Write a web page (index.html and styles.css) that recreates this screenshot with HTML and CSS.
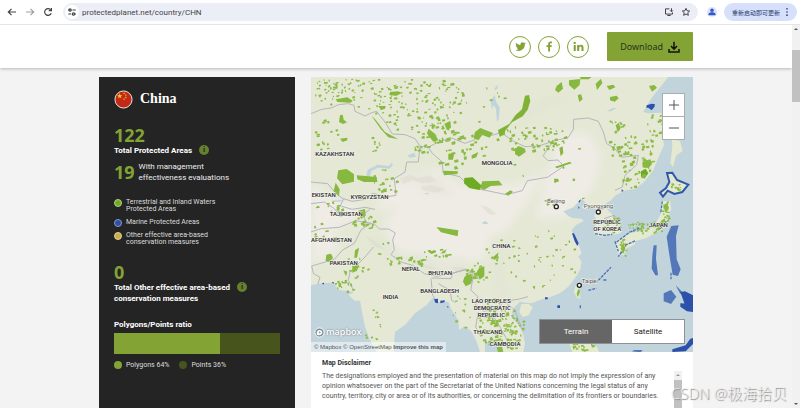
FILE: index.html
```
<!DOCTYPE html>
<html lang="en">
<head>
  <meta charset="UTF-8" />
  <meta name="viewport" content="width=device-width, initial-scale=1" />
  <title>China | Protected Planet</title>
  <link rel="stylesheet" href="styles.css">
</head>
<body>

  <div class="browser-bar">
    <button class="nav-btn" aria-label="Back"><svg viewBox="0 0 12 12"><path d="M10 6H2.5M5.5 2.8 2.3 6l3.2 3.2" /></svg></button>
    <button class="nav-btn faded" aria-label="Forward"><svg viewBox="0 0 12 12"><path d="M2 6h7.5M6.5 2.8 9.7 6 6.5 9.2" /></svg></button>
    <button class="nav-btn" aria-label="Reload"><svg viewBox="0 0 12 12"><path d="M9.2 7.2A3.4 3.4 0 1 1 8.6 3.7M9.4 2v2.6H6.8" /></svg></button>
    <div class="address">
      <span class="site-info"><svg viewBox="0 0 12 12"><path d="M2.5 4h2M8 8h1.800M6.500 4h3.300M2.200 8h3" /><circle cx="4" cy="4" r="1.200" /><circle cx="7.600" cy="8" r="1.200" /></svg></span>
      <input type="text" aria-label="Address" value="protectedplanet.net/country/CHN" />
      <button class="nav-btn" aria-label="Install"><svg viewBox="0 0 12 12"><path d="M6.5 2.2H1.8v6.3h8.4V6.5M4 10.2h4M9 1.5v4M7.3 4 9 5.7 10.7 4" /></svg></button>
      <button class="nav-btn" aria-label="Bookmark"><svg viewBox="0 0 12 12"><path d="M6 1.6l1.3 2.9 3.1.3-2.3 2.1.7 3.1L6 8.4 3.2 10l.7-3.1-2.3-2.1 3.1-.3z" /></svg></button>
    </div>
    <button class="profile" aria-label="Profile"><svg viewBox="0 0 12 12"><circle cx="6" cy="3.8" r="2.1" /><path d="M1.8 10V8.6C1.8 7 4 6.4 6 6.4s4.2.6 4.2 2.2V10z" /></svg></button>
    <button class="update">重新启动即可更新<svg viewBox="0 0 4 12"><circle cx="2" cy="2.2" r="1" /><circle cx="2" cy="6" r="1" /><circle cx="2" cy="9.8" r="1" /></svg></button>
  </div>

  <div class="viewport">
    <div class="page">
      <header class="site-header">
        <a class="social" href="#" aria-label="Twitter"><svg viewBox="0 0 24 24"><path d="M23.6 5c-.8.4-1.700.6-2.700.8 1-.6 1.700-1.500 2-2.600-.9.500-1.900.9-3 1.100a4.700 4.700 0 0 0-8 4.300C8 8.400 4.600 6.600 2.300 3.700c-1.300 2.200-.6 4.900 1.500 6.300-.8 0-1.500-.2-2.100-.6 0 2.300 1.600 4.200 3.800 4.700-.7.200-1.400.2-2.100.1.600 1.900 2.300 3.200 4.400 3.300A9.500 9.500 0 0 1 .8 19.400 13.400 13.400 0 0 0 21.300 7.500c.9-.7 1.700-1.500 2.300-2.500z" /></svg></a>
        <a class="social" href="#" aria-label="Facebook"><svg viewBox="0 0 24 24"><path d="M9 23V13H5.500V9H9V6.500C9 3 11 1 14.200 1c1.500 0 2.800.1 3.200.2v3.600h-2.200c-1.700 0-2.100.9-2.100 2.100V9h4.100l-.6 4h-3.500v10z" /></svg></a>
        <a class="social" href="#" aria-label="LinkedIn"><svg viewBox="0 0 24 24"><path d="M1.500 8.500H6V22H1.500zM9 8.500h4.300v1.900c.6-1.200 2.100-2.300 4.300-2.300 4.500 0 5.400 3 5.400 6.800V22h-4.500v-6.300c0-1.500 0-3.500-2.100-3.500s-2.800 1.700-2.800 3.400V22H9z" /><circle cx="3.700" cy="4.200" r="2.600" /></svg></a>
        <button class="download">Download<svg viewBox="0 0 24 24"><path d="M12 1.500V16M6 10l6 6.500 6-6.500M2 16v6h20v-6" /></svg></button>
      </header>

      <main class="content">
        <section class="stats">
          <h1>
            <svg class="flag" viewBox="0 0 20 20"><circle cx="10" cy="10" r="9" /><path d="M6 3.500l.8 2h2L7.200 6.800l.6 2L6 7.600 4.200 8.800l.6-2L3.200 5.500h2zM10 3h1.300v1.200H10zM11.800 4.800h1.200V6h-1.200zM11.800 7.200h1.200v1.200h-1.200zM10 9h1.300v1.200H10z" /></svg>
            China
          </h1>

          <div class="total">
            <strong class="number">122</strong>
            <h2>Total Protected Areas <button class="info" aria-label="More info">i</button></h2>
            <div class="managed">
              <strong class="number">19</strong>
              <p>With management<br>effectiveness evaluations</p>
            </div>
          </div>

          <ul class="legend">
            <li><span class="dot land"></span>Terrestrial and Inland Waters<br>Protected Areas</li>
            <li><span class="dot marine"></span>Marine Protected Areas</li>
            <li><span class="dot other"></span>Other effective area-based<br>conservation measures</li>
          </ul>

          <div class="oecm">
            <strong class="number">0</strong>
            <h2><span>Total Other effective area-based<br>conservation measures</span> <button class="info" aria-label="More info">i</button></h2>
          </div>

          <h2>Polygons/Points ratio</h2>
          <div class="ratio"><div style="width: 64%"></div></div>
          <ul class="ratio-key">
            <li><span class="dot polygons"></span>Polygons 64%</li>
            <li><span class="dot points"></span>Points 36%</li>
          </ul>
        </section>

        <section class="map-column">
          <div class="map">
            <svg class="map-canvas" viewBox="18 15 1146 825" role="img" aria-label="Map of protected areas in China">
              <defs>
                <filter id="soft"><feGaussianBlur stdDeviation="14" /></filter>
              </defs>
              <rect class="ground" x="18" y="15" width="1146" height="825" />

              <!-- dry highlands and pale plains -->
              <g class="dry" filter="url(#soft)">
                <path d="M280 310L400 290 480 345 640 335 720 300 700 340 660 400 600 480 520 500 400 490 300 470 240 440 290 400 200 420z" />
                <path d="M18 330L100 390 170 400 150 440 90 470 100 540 20 580z" />
                <path d="M240 450L400 440 560 470 540 560 430 580 330 550 260 530z" />
                <path d="M760 190L850 180 890 250 870 340 780 440 690 440 720 330z" />
              </g>
              <g class="relief" filter="url(#soft)">
                <path d="M280 325q60-25 130 10M350 355q50-15 90 15M200 500q60 30 80 60M320 550q80 30 160 20M590 550q-30 90 20 130M650 150q40-60 130-70" />
              </g>
              <g class="hills">
                <path d="M285 320l30-12 25 10 35-8 20 18-42 6-30-10-28 12zM345 345l35-5 40 12-25 10-40-8zM525 400l25 5 25 22-20 2zM180 490l35 20 25 25-32-12zM300 565l40 8 70 20-45-3zM440 585l35 0 20 12-40 5z" />
              </g>

              <!-- seas -->
              <g class="water">
                <path d="M1090 15L1040 77 1015 120 1030 124 1068 122 1080 140 1075 205 1077 220 1065 245 1045 295 1015 332 988 352 962 355 932 370 918 385 903 394 902 408 920 425 940 450 950 470 947 483 920 490 885 494 868 485 867 465 878 450 868 432 873 412 866 402 841 410 830 408 842 392 832 381 820 390 805 406 775 418 790 432 802 438 830 440 836 447 812 460 800 474 805 489 823 524 830 544 820 554 830 569 825 594 810 619 790 644 765 664 735 676 705 684 680 694 660 692 645 689 630 704 620 720 625 740 645 764 655 789 660 814 655 840H1164V15z" />
                <path d="M18 639L60 633 85 632 100 654 120 656 148 660 130 669 150 686 165 686 170 714 180 764 195 804 215 840H18z" />
                <path d="M266 840L270 779 300 759 330 724 365 699 385 676 400 690 430 689 440 714 460 744 462 774 480 762 500 779 515 809 525 840z" />
                <path d="M540 815l18-10 25 5 10 15-8 15h-45z" />
                <path d="M183 315l5-22 30-15 35 4 6-10 5 6-10 12-35-3-20 10-5 20zM80 386l30-3v5l-28 3zM308 250l20-8 5 12-18 3zM530 452l12-5 8 8-12 2zM905 118l18-10 12 0-16 10zM355 366l15-4v5z" />
                <path d="M568 50l10-12 0 12 -8 4zM557 85l12-16 5 22 10 14-2 34-6 12-3-40-8-12-4 14z" class="thin" />
              </g>

              <!-- islands -->
              <g class="island">
                <path d="M1100 202l25 5 8 30-20 14-9 35-8-12 6-50z" />
                <path d="M649 696l22 0 12 10-12 24-18 5-10-15z" />
                <path d="M821 642l5 38-10-3-9-16 5-22z" />
                <path d="M935 508l40-25 50-10 28-20 14-26 3-40 25 0 4 24-18 44-8 16-50 28-42 10-16 20-8 20-18-4-7-20z" />
                <path d="M960 520l22-8 12-10-6 16-20 10z" />
                <path d="M790 806l24-14 28 10 34 22 6 16h-80z" />
                <path class="hokkaido" d="M1086 303l16-1 14 22 34 14-18 22-24 6-20-10-14 18-9-12 18-14 10-18z" />
              </g>

              <!-- country borders -->
              <g class="border">
                <path d="M18 125L50 112 78 108 100 98 130 95 147 100 150 118 180 132 200 122 215 118 240 150 262 186 300 188 330 200 345 222 370 226 390 215 412 206 440 198 480 214 510 203 512 180 530 172 560 190 590 182 620 205 660 224 700 222 750 206 790 196 805 172 806 142 850 138 880 148 895 180 905 215 930 230 950 256 1000 250 995 278 960 310 952 345 930 355" />
                <path d="M370 226l12 18 30 26 2 32 50 12 32 32 50 10 58 12 48-12 15-30 60-10 50-34-18-18-30 2-15-15 25-35" />
                <path d="M345 222l-5 48-35 0-5 30-32 20 5 50-25 4-45-10-22 18-40 6-25-8-10 22 36 10 38-6 30 6M18 330l50 5 25 30 25 18M18 395l40-5 30 20 15 20 30 0" />
                <path d="M195 412l-20 15 8 25 25 4 15 15 28 0 20 12-8 20 5 30-10 15 30 22 35 10 35 25 38 8 40-8 45-12 18 5 8 20" />
                <path d="M18 480l30-10 55-4 50-20 45 8-30 20-20 40-35 20-25 28-68 20 5 22 20 12-7 22M205 525l-25 30-45 45-5 25 15 28" />
                <path d="M380 618l58 2 5-16 38-12 24 22-8 40 22 20-8 26 26 18 40-10 22-20 40-6 30-8M378 620l5 50 8 12M400 635l35 20 5 30 12 6" />
                <path d="M520 720l-8 45 16 30M560 725l25 40 22 40M600 690l30 25 22 60M897 440l30-10 14 16M885 415l20-10" />
              </g>

              <!-- large protected areas -->
              <g class="areas">
                <path d="M92 82l35-6 16 10-6 6-40-2zM105 130l8-2 3 15 10 8-12 5-12-6zM100 295l25-4 22 16 0 22-35 8-16-18zM155 310l60 5 2 15-40 0-20-8zM92 332l12 20-2 20-16-15zM105 200l22-3 0 8-14 5zM255 60l25-2 10 5-15 8-22-2zM220 102l22 0-2 8-12 4z" />
                <path d="M200 132c15 12 25 30 40 48l40 22-30-6-22-24-24-34z" />
                <path d="M370 170l20 15 10 20-15 4-18-22zM418 155l18-8 2 20-12 8zM430 245l18-2-4 20-14 0zM414 296l45 2-2 8-40 4zM510 180l16-12 38 15-10 14-22-8-12 16-14-6zM580 180l20-12 0 20-15 5zM500 250l20-10-6 16-14 4z" />
                <path class="strong" d="M478 318l25-2 28 26-8 12-30-6-16-14z" />
                <path d="M532 328l50-2 10 14-35 2-20 12-12-6z" />
                <path class="lake" d="M660 71l12-2 4 18-8 26-15 20-32 18-36 45-6-22 34-18 18-26 20-18z" />
                <path d="M630 232l10-10 20 8 2 10-20 14-12-8zM755 42l15-12 4 20-14 12-10-8zM792 25l34-4-2 18-16 14-16-14zM872 35l16-15 4 14-16 20zM905 42l20-4 6 8-18 8zM818 70l10-4 5 16-10 8zM915 75l20-4 6 8-12 10-14-4zM825 14h36l-10 8h-24zM1032 42l16-3 8 8-15 12z" />
                <path d="M763 228l10-5 2 20-8 10zM747 320l12 0 3 8-14 5zM750 284l45-15 5 5-45 15zM600 365l16-10 8 4-14 12zM932 160l10-8 4 20-8 8zM1012 270l24-8 5 14-10 12-18-2z" />
                <path class="strong" d="M1008 298l14-8 8 14-12 16-10-6z" />
                <path d="M394 465l66 10-2 18-50-12zM150 535l12-8-6 30-8 0zM64 548l14-3 6 12-10 12-12-2zM142 582l20-4-6 18-14 6zM115 595l12 4-4 14zM160 416l20-5 2 20-14 10zM478 615l12-8 14 8-6 20-16 8-8-14zM512 605l10-16 16-6 0 30-14 10-4-12zM565 555l16-14-4 16-10 8zM370 540l20-6 4 6-14 6zM405 545l20-14-5 12zM820 650l5 8-6 18-4-10zM575 825h16l4 14-16 2z" />
                <path d="M955 510l6 20-6 15-8-15zM1055 470l15-25 10-5-5 20-15 16zM1075 400l12-8 4 20-10 10z" />
              </g>
              <!-- scattered small ones are added by map.js -->
              <g id="specks" class="specks"></g>

              <!-- marine areas -->
              <g class="marine-areas">
                <path d="M1025 100l15-5 10 2-2 8-8 10-10-8-6 0zM820 388l8-6-4 10zM801 484h6l14 30-4 8-8-14zM972 680l8 0zM757 700h8v8h-8zM720 676h8v6h-8zM387 682l12-2 0 14-8-2zM406 686l14-1-2 6-12 3zM425 702l6 2-2 4zM950 352l6 4-6 4zM52 633l5-1v5h-5zM80 630l6 0v6zM820 402l4 6-4 2z" />
                <path class="pale" d="M1046 520h9l-2 40 6 50h-8l-11-20 2-40zM1085 494l14-32 22-2-8 32 2 70 12 30-8 20-16-4-10-60zM1076 664l22-10 16 20-16 22-22-8zM1112 640l20 20-6 6zM980 838l8-4 25 0-6 7z" />
                <path d="M1126 660l14-2 24 12v40l-22-6zM1126 694l38 2v24l-18-2-20-14zM1102 832l40-12 14-20 8-2v18l-22 22-40 2z" />
                <path class="outline" d="M935 510l40-30 28-12M930 508l10 30M960 520l32-14M870 485l30 5 22-3M950 540l-10 14M880 625l24-25 14-14M895 624h12M850 655l24-6M826 700v10M1098 602v20M1065 470l18-20M1072 388l-5 35" />
              </g>

              <g class="labels">
                <text x="31" y="251">KAZAKHSTAN</text>
                <text x="20" y="374">EKISTAN</text>
                <text x="137" y="381">KYRGYZSTAN</text>
                <text x="74" y="433">TAJIKISTAN</text>
                <text x="18" y="509">AFGHANISTAN</text>
                <text x="74" y="578">PAKISTAN</text>
                <text x="290" y="597">NEPAL</text>
                <text x="370" y="610">BHUTAN</text>
                <text x="346" y="662">BANGLADESH</text>
                <text x="233" y="682">INDIA</text>
                <text x="530" y="278">MONGOLIA</text>
                <text x="562" y="527">CHINA</text>
                <text x="500" y="694">LAO PEOPLE'S</text>
                <text x="506" y="715">DEMOCRATIC</text>
                <text x="518" y="736">REPUBLIC</text>
                <text x="505" y="787">THAILAND</text>
                <text x="554" y="822">CAMBODIA</text>
                <text x="865" y="456">REPUBLIC</text>
                <text x="865" y="477">OF KOREA</text>
                <text x="1032" y="464">JAPAN</text>
                <text class="city" x="726" y="393">Beijing</text>
                <text class="city" x="836" y="409">Pyongyang</text>
                <text class="city" x="830" y="634">Taipei</text>
              </g>
              <g class="capitals">
                <circle cx="754" cy="404" r="6" />
                <circle cx="880" cy="420" r="6" />
                <circle cx="823" cy="640" r="6" />
              </g>
            </svg>

            <div class="zoom">
              <button aria-label="Zoom in"><svg viewBox="0 0 12 12"><path d="M6 1v10M1 6h10" /></svg></button>
              <button aria-label="Zoom out"><svg viewBox="0 0 12 12"><path d="M1 6h10" /></svg></button>
            </div>
            <div class="style-toggle">
              <button class="active">Terrain</button>
              <button>Satellite</button>
            </div>
            <a class="mapbox-logo" href="#"><svg viewBox="0 0 12 12"><circle cx="6" cy="6" r="5" /><path d="M3.200 8.800c-.5-2.500 0-4.200 1.500-5.200 2-1.200 4.200.2 4.300 2.200.1 2.500-2.500 3.600-5.800 3zM6.300 4.200l.5 1.200 1.200.5-1.200.5-.5 1.200-.5-1.200-1.200-.5 1.200-.5z" /></svg>mapbox</a>
            <div class="attribution"><a href="#">© Mapbox</a> <a href="#">© OpenStreetMap</a> <a class="improve" href="#">Improve this map</a></div>
          </div>

          <div class="disclaimer">
            <h3>Map Disclaimer</h3>
            <div class="disclaimer-body">
              <p>The designations employed and the presentation of material on this map do not imply the expression of any<br>opinion whatsoever on the part of the Secretariat of the United Nations concerning the legal status of any<br>country, territory, city or area or of its authorities, or concerning the delimitation of its frontiers or boundaries.</p>
              <div class="scrollbar small"><span class="arrow up"></span><span class="thumb"></span></div>
            </div>
          </div>
        </section>
      </main>
    </div>

    <div class="scrollbar">
      <span class="arrow up"></span>
      <span class="thumb"></span>
      <span class="arrow down"></span>
    </div>
  </div>

  <div class="watermark">CSDN @极海拾贝</div>

  <script src="map.js"></script>
</body>
</html>
```
FILE: styles.css
```
* {
  box-sizing: border-box;
}
body {
  margin: 0;
  height: 100vh;
  display: flex;
  flex-direction: column;
  overflow: hidden;
  background: #f3f3f3;
  font-family: Roboto, 'Noto Sans CJK SC', sans-serif;
  font-size: 8px;
  color: #fff;
}
h1, h2, h3, p, ul {
  margin: 0;
  padding: 0;
}
ul {
  list-style: none;
}
button {
  font-family: inherit;
  padding: 0;
  border: none;
  background: none;
  cursor: pointer;
}
a {
  color: inherit;
  text-decoration: none;
}

/* browser bar */
.browser-bar {
  flex: none;
  display: flex;
  align-items: center;
  height: 25px;
  padding: 0 3px 0 6px;
  background: #fff;
  border-bottom: 1px solid #e3e5e9;
}
.nav-btn {
  width: 12px;
  height: 12px;
  margin-right: 6px;
}
.nav-btn svg,
.site-info svg {
  display: block;
  width: 12px;
  height: 12px;
  fill: none;
  stroke: #444;
  stroke-width: 1.2;
}
.nav-btn.faded {
  opacity: 0.5;
}
.address {
  flex: 1;
  display: flex;
  align-items: center;
  height: 18px;
  margin-left: 3px;
  padding: 0 0 0 2px;
  border-radius: 9px;
  background: #ebeef7;
}
.address .nav-btn {
  margin: 0 7px 0 0;
  width: 10px;
}
.address .nav-btn svg {
  width: 10px;
}
.site-info {
  padding: 1px;
  border-radius: 50%;
  background: #fff;
}
.address input {
  flex: 1;
  min-width: 0;
  margin-left: 3px;
  padding: 0;
  border: none;
  outline: none;
  background: none;
  font-family: inherit;
  font-size: 8px;
  color: #444;
}
.profile {
  width: 10px;
  height: 10px;
  margin: 0 7px 0 9px;
  border-radius: 50%;
  background: #dbe4fb;
}
.profile svg {
  display: block;
  fill: #3557c9;
}
.update {
  display: flex;
  align-items: center;
  gap: 5px;
  height: 18px;
  padding: 0 8px;
  border-radius: 9px;
  background: #d6e0fb;
  font-size: 6px;
  color: #26376e;
}
.update svg {
  height: 10px;
  width: 4px;
  fill: #26376e;
}

/* page */
.viewport {
  flex: 1;
  min-height: 0;
  display: flex;
}
.page {
  flex: 1;
  display: flex;
  flex-direction: column;
  overflow: hidden;
}
.site-header {
  flex: none;
  display: flex;
  justify-content: flex-end;
  align-items: center;
  gap: 7px;
  height: 43px;
  padding: 0 12.5%;
  background: #fff;
  box-shadow: 0 1px 3px rgba(0, 0, 0, 0.25);
}
.social {
  display: flex;
  align-items: center;
  justify-content: center;
  width: 22px;
  height: 22px;
  border: 1px solid #83a335;
  border-radius: 50%;
}
.social svg {
  width: 11px;
  height: 11px;
  fill: #83a335;
}
.download {
  display: flex;
  align-items: center;
  gap: 5px;
  height: 29px;
  margin-left: 11px;
  padding: 0 13px;
  border-radius: 1px;
  background: #83a335;
  font-family: 'Noto Sans', sans-serif;
  font-size: 9px;
  color: #2b331c;
}
.download svg {
  width: 12px;
  height: 12px;
  fill: none;
  stroke: #111;
  stroke-width: 3;
}
.content {
  flex: 1;
  display: grid;
  grid-template-columns: 196fr 382fr;
  gap: 16px;
  padding: 9px 12.5% 0;
}

/* dark panel */
.stats {
  padding: 12px 15px 0;
  background: #242424;
}
.stats h1 {
  display: flex;
  align-items: center;
  gap: 7px;
  line-height: 20px;
  font-family: 'Liberation Serif', serif;
  font-size: 14px;
}
.flag {
  width: 19px;
  height: 19px;
}
.flag circle {
  fill: #c22a17;
  stroke: #f3f0ee;
  stroke-width: 1;
}
.flag path {
  fill: #f4c82c;
}
.stats h2 {
  display: flex;
  gap: 7px;
  line-height: 11px;
  font-size: 8px;
}
.total {
  margin-top: 16px;
}
.number {
  display: block;
  line-height: 20px;
  font-family: 'Noto Sans', sans-serif;
  font-size: 18px;
  color: #83a335;
}
.info {
  width: 10px;
  height: 10px;
  border-radius: 50%;
  background: #66802d;
  font-size: 8px;
  font-weight: 700;
  line-height: 10px;
  color: #242424;
}
.managed {
  display: flex;
  align-items: center;
  gap: 4px;
  margin-top: 5px;
  line-height: 11px;
  color: #eee;
}
.legend {
  display: grid;
  gap: 6px;
  margin-top: 16px;
}
.legend li,
.ratio-key li {
  display: flex;
  gap: 4px;
  line-height: 7px;
  font-size: 7px;
  color: #ddd;
}
.legend li {
  position: relative;
  display: block;
  padding-left: 12px;
}
.legend .dot {
  position: absolute;
  left: 0;
  top: 0;
}
.dot {
  width: 8px;
  height: 8px;
  border-radius: 50%;
}
.land {
  background: #6eab20;
  border: 1px solid #b5d18d;
}
.marine {
  background: #2f4fa5;
  border: 1px solid #8899c9;
}
.other {
  background: #cdae48;
  border: 1px solid #e0cf99;
}
.oecm {
  margin: 16px 0 15px;
}
.ratio {
  height: 21px;
  margin-top: 3px;
  background: #47541c;
}
.ratio div {
  height: 100%;
  background: #83a335;
}
.ratio-key {
  display: flex;
  gap: 10px;
  margin-top: 7px;
}
.ratio-key li {
  line-height: 8px;
}
.polygons {
  background: #83a335;
}
.points {
  background: #47541c;
}

/* map */
.map-column {
  display: flex;
  flex-direction: column;
  min-width: 0;
}
.map {
  position: relative;
}
.map-canvas {
  display: block;
  width: 100%;
}
.ground {
  fill: #e4e8d4;
}
.dry {
  fill: #efece6;
}
.relief {
  fill: none;
  stroke: #dfe2d3;
  stroke-width: 12;
}
.hills {
  fill: #dddccf;
  opacity: 0.6;
}
.water {
  fill: #c1d4dc;
}
.island {
  fill: #e4e9cf;
}
.hokkaido {
  stroke: #2f57ad;
  stroke-width: 6;
}
.border {
  fill: none;
  stroke: #b6b6be;
  stroke-width: 3;
  stroke-linejoin: round;
}
.areas {
  fill: #87b83f;
}
.areas .strong {
  fill: #6eaa22;
}
.areas .lake {
  fill: #7fb335;
}
.specks {
  fill: #8cbb48;
}
.marine-areas {
  fill: #2c51ab;
}
.marine-areas .pale {
  fill: #5377b8;
}
.marine-areas .outline {
  fill: none;
  stroke: #4c72b8;
  stroke-width: 4;
  stroke-dasharray: 9 3;
}
.labels {
  font-family: Roboto, sans-serif;
  font-size: 18px;
  font-weight: 500;
  fill: #222;
  stroke: #f5f5ef;
  stroke-width: 3;
  paint-order: stroke;
}
.labels .city {
  font-weight: 400;
  fill: #555;
}
.capitals {
  fill: #fff;
  stroke: #222;
  stroke-width: 4;
}
.zoom {
  position: absolute;
  top: 16px;
  right: 8px;
  display: flex;
  flex-direction: column;
  width: 23px;
  border: 1px solid #a9adaf;
  background: #fff;
}
.zoom button {
  display: flex;
  align-items: center;
  justify-content: center;
  height: 22px;
}
.zoom button + button {
  height: 23px;
  border-top: 1px solid #a9adaf;
}
.zoom svg {
  width: 12px;
  height: 12px;
  stroke: #555;
  stroke-width: 1;
}
.style-toggle {
  position: absolute;
  right: 8px;
  bottom: 8px;
  display: flex;
  width: 146px;
  height: 25px;
  border: 1px solid #8d9294;
  background: #fff;
}
.style-toggle button {
  flex: 1;
  font-size: 8px;
  color: #222;
}
.style-toggle .active {
  background: #666;
  color: #fff;
}
.mapbox-logo {
  position: absolute;
  left: 3px;
  bottom: 14px;
  display: flex;
  align-items: center;
  gap: 1px;
  font-family: 'Open Sans', sans-serif;
  font-size: 9px;
  font-weight: 600;
  line-height: 12px;
  color: #fff;
  text-shadow: 0 0 2px #666;
}
.mapbox-logo svg {
  width: 11px;
  height: 11px;
  fill: #84919a;
  stroke: #fff;
  stroke-width: 1;
}
.mapbox-logo path {
  fill: #fff;
  stroke: none;
  fill-rule: evenodd;
}
.attribution {
  position: absolute;
  left: 0;
  bottom: 0;
  padding: 0 3px;
  background: rgba(255, 255, 255, 0.5);
  font-family: 'Liberation Sans', sans-serif;
  font-size: 6px;
  line-height: 10px;
  color: #505558;
}
.improve {
  font-weight: 700;
}
.disclaimer {
  flex: 1;
  padding: 6px 11px 0;
  background: #fff;
  color: #555;
}
.disclaimer h3 {
  line-height: 10px;
  font-size: 7px;
  color: #333;
}
.disclaimer-body {
  display: flex;
  justify-content: space-between;
  margin-top: 3px;
  height: 60px;
}
.disclaimer p {
  font-size: 7px;
  line-height: 10px;
  white-space: nowrap;
}

/* scrollbars */
.scrollbar {
  display: flex;
  flex-direction: column;
  align-items: center;
  width: 8px;
  background: #f1f1f1;
}
.scrollbar .thumb {
  width: 8px;
  height: 52px;
  margin-top: 17px;
  margin-bottom: auto;
  background: #c1c1c1;
}
.scrollbar.small {
  height: 60px;
}
.scrollbar.small .thumb {
  margin-top: 1px;
}
.arrow {
  margin: 3px 0;
  border: 2px solid transparent;
}
.arrow.up {
  border-top: none;
  border-bottom-color: #555;
}
.arrow.down {
  border-bottom: none;
  border-top-color: #555;
}
.small .arrow.up {
  border-bottom-color: #999;
}
.watermark {
  position: absolute;
  right: 13px;
  bottom: 3px;
  font-family: 'Noto Sans', 'Noto Sans CJK SC', sans-serif;
  font-size: 15px;
  font-weight: 300;
  line-height: 24px;
  color: rgba(240, 240, 240, 0.9);
  text-shadow: 1px 1px 1px #888;
}
```
FILE: map.js
```
// clusters of small protected areas: [centre x, centre y, radius x, radius y, count, size]
const clusters = [
  [60, 60, 40, 40, 34, 6],
  [130, 55, 60, 35, 26, 6],
  [60, 200, 40, 60, 16, 7],
  [210, 90, 60, 70, 26, 6],
  [320, 70, 90, 50, 50, 6],
  [330, 140, 90, 40, 40, 6],
  [430, 80, 50, 60, 34, 7],
  [400, 170, 60, 50, 26, 8],
  [440, 230, 60, 60, 24, 10],
  [350, 225, 25, 18, 16, 7],
  [500, 230, 60, 50, 10, 9],
  [540, 110, 80, 70, 8, 7],
  [660, 200, 90, 40, 34, 8],
  [740, 200, 40, 40, 16, 8],
  [930, 200, 50, 60, 26, 8],
  [1000, 250, 60, 60, 40, 8],
  [1050, 160, 30, 40, 20, 7],
  [980, 320, 40, 30, 16, 7],
  [760, 260, 150, 160, 14, 7],
  [240, 330, 40, 40, 20, 8],
  [210, 215, 15, 30, 8, 6],
  [80, 410, 50, 25, 14, 8],
  [180, 450, 40, 20, 18, 8],
  [50, 490, 40, 50, 8, 9],
  [115, 640, 30, 25, 14, 8],
  [150, 580, 40, 40, 10, 7],
  [300, 570, 60, 18, 20, 9],
  [240, 540, 40, 30, 6, 6],
  [200, 760, 25, 60, 14, 5],
  [520, 600, 40, 30, 24, 8],
  [390, 545, 40, 16, 14, 8],
  [560, 750, 45, 70, 80, 8],
  [620, 770, 35, 60, 50, 7],
  [470, 720, 30, 60, 12, 6],
  [700, 560, 120, 90, 36, 6],
  [600, 540, 60, 60, 12, 7],
  [920, 455, 24, 26, 24, 6],
  [1020, 465, 60, 18, 44, 6],
  [1080, 420, 12, 36, 24, 6],
  [955, 525, 14, 26, 14, 6],
  [1112, 342, 18, 12, 10, 6],
  [825, 820, 40, 18, 26, 7]
];

let seed = 7;
function rand() {
  seed = (seed * 16807) % 2147483647;
  return seed / 2147483647;
}

const path = document.createElementNS('http://www.w3.org/2000/svg', 'path');
let d = '';

clusters.forEach(([cx, cy, rx, ry, count, size]) => {
  for (let i = 0; i < count; i++) {
    const angle = rand() * Math.PI * 2;
    const reach = Math.sqrt(rand());
    const x = Math.round(cx + Math.cos(angle) * rx * reach);
    const y = Math.round(cy + Math.sin(angle) * ry * reach);
    const w = Math.ceil(size * (0.3 + rand()));
    const h = Math.ceil(size * (0.3 + rand() * 0.7));
    d += `M${x} ${y}l${w} ${-Math.round(h / 3)} 2 ${h} ${-w} 2z`;
  }
});

path.setAttribute('d', d);
document.getElementById('specks').appendChild(path);
```
